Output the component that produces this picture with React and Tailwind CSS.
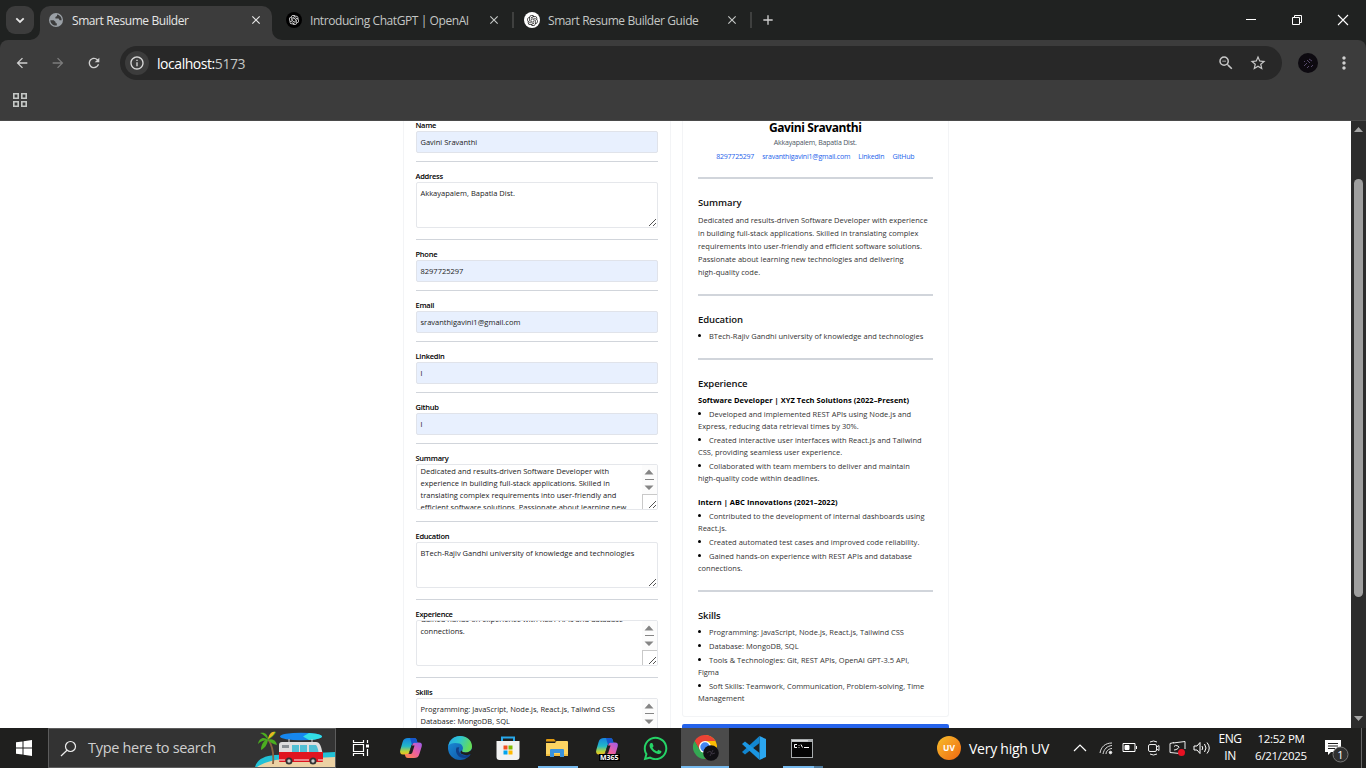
import React from 'react';
import { MdArrowBack, MdArrowForward, MdRefresh, MdInfoOutline, MdStarBorder, MdZoomOut, MdClose, MdAdd, MdMoreVert } from 'react-icons/md';
import { RiOpenaiFill } from 'react-icons/ri';
import { FaWhatsapp } from 'react-icons/fa';

function Globe() {
  return (
    <svg width="14" height="14" viewBox="0 0 14 14">
      <circle cx="7" cy="7" r="7" fill="#9aa0a6" />
      <path d="M1.3 7.2h3.4l1.9 1.7v1.3h1.2v2.2c-3.300.6-6.300-1.700-6.500-5.200zM8 1.500v1.400L6.400 4v1.500h3.200l1 1.800h2c.300-2.700-1.500-5.200-4.600-5.800z" fill="#3c3c3c" />
    </svg>
  );
}

function Tab({ icon, title, active, width }) {
  return (
    <div className={`relative flex h-[34px] items-center pl-2 ${width} ${active ? 'rounded-t-[10px] bg-[#3c3c3c] text-[#e6e6e6]' : 'text-[#c4c7c5]'}`}>
      {active && (
        <>
          <svg className="absolute bottom-0 -left-[10px]" width="10" height="10"><path d="M10 0v10H0A10 10 0 0 0 10 0z" fill="#3c3c3c" /></svg>
          <svg className="absolute bottom-0 -right-[10px]" width="10" height="10"><path d="M0 0v10H10A10 10 0 0 1 0 0z" fill="#3c3c3c" /></svg>
        </>
      )}
      <div className="flex w-4 shrink-0 justify-center -translate-y-[3px]">{icon}</div>
      <div className="ml-2 flex-1 whitespace-nowrap text-[12px] tracking-[-0.42px] -translate-y-[2px]">{title}</div>
      <MdClose className="mr-[9px] -translate-y-[3px]" size={14} color={active ? '#e6e6e6' : '#c4c7c5'} />
    </div>
  );
}

function Browser() {
  return (
    <header className="h-[121px] shrink-0 bg-[#202221]">
      <div className="flex h-10 items-start">
        <div className="mt-1.5 ml-1.5 flex h-7 w-7 items-center justify-center rounded-[9px] bg-[#3c3c3c]">
          <svg width="10" height="7" viewBox="0 0 10 7"><path d="M1.300 1.300 5 5 8.700 1.300" fill="none" stroke="#e6e6e6" strokeWidth="1.800" /></svg>
        </div>
        <div className="mt-1.5 ml-1.5 flex">
          <Tab active width="w-[232px]" title="Smart Resume Builder" icon={<Globe />} />
          <div className="w-[6px]" />
          <Tab width="w-[232px]" title="Introducing ChatGPT | OpenAI" icon={<span className="flex h-4 w-4 items-center justify-center rounded-full bg-black text-white"><RiOpenaiFill size={12} /></span>} />
          <div className="mt-1.5 ml-[2px] h-4 w-[2px] bg-[#3f403f]" />
          <div className="w-[2px]" />
          <Tab width="w-[232px]" title="Smart Resume Builder Guide" icon={<span className="flex h-4 w-4 items-center justify-center rounded-full bg-white text-[#222]"><RiOpenaiFill size={13} /></span>} />
          <div className="mt-1.5 ml-[2px] h-4 w-[2px] bg-[#3f403f]" />
          <MdAdd className="mt-[6px] ml-[8px]" size={16} color="#d0d0d0" />
        </div>
        <div className="mt-[13px] mr-[16px] ml-auto flex gap-[32px]">
          <svg width="14" height="14"><path d="M2 6.500h10" stroke="#fff" /></svg>
          <svg width="14" height="14" fill="none" stroke="#fff"><path d="M2.500 4.500h7v7h-7zM4.500 4.500v-2h7v7h-2" /></svg>
          <svg width="14" height="14" stroke="#fff" strokeWidth="1.100"><path d="M2 2l10 10M12 2 2 12" /></svg>
        </div>
      </div>
      <div className="h-[81px] rounded-t-[8px] border-b border-[#4a4a4a] bg-[#3c3c3c]">
        <div className="flex h-[46px] items-center">
          <MdArrowBack className="ml-[14px]" size={16} color="#d0d0d0" />
          <MdArrowForward className="ml-[20px]" size={16} color="#7c7c7c" />
          <MdRefresh className="ml-[20px]" size={16} color="#d0d0d0" />
          <div className="ml-[18px] flex h-[34px] w-[1162px] items-center rounded-full bg-[#282828] pl-[5px]">
            <span className="flex h-6 w-6 items-center justify-center rounded-full bg-[#3c3c3c]"><MdInfoOutline size={16} color="#d8d8d8" /></span>
            <span className="ml-2 text-[14px] tracking-[-0.45px] text-white">localhost:<span className="text-[#c4c7c5]">5173</span></span>
            <MdZoomOut className="ml-auto" size={18} color="#c8c8c8" />
            <MdStarBorder className="mr-[15px] ml-[14px]" size={18} color="#c8c8c8" />
          </div>
          <svg className="ml-[16px]" width="20" height="20"><circle cx="10" cy="10" r="10" fill="#0d0a10" /><path d="M6 13l3-3m0-3 3 3m-1-4 3 2M9 15l2-2m-5-5 1 1m6 5 2-2" stroke="#574a6b" /></svg>
          <MdMoreVert className="ml-[16px]" size={20} color="#d0d0d0" />
        </div>
        <svg className="mt-[7px] ml-[13px]" width="14" height="14" fill="none" stroke="#c4c7c5" strokeWidth="1.600"><path d="M.8.800h4.400v4.400H.8zM8.800.800h4.400v4.400H8.800zM.8 8.800h4.400v4.400H.8zM8.800 8.800h4.400v4.400H8.800z" /></svg>
      </div>
    </header>
  );
}

const Rule = () => <div className="my-2 h-px bg-[#d1d5db]" />;

function Grip() {
  return <svg width="9" height="9" className="absolute right-0 bottom-0"><path d="M1 8 8 1M5 8l3-3" stroke="#555" fill="none" /></svg>;
}

const Label = ({ children }) => <div className="-ml-[0.5px] h-3 text-[7.5px] leading-[12px] font-semibold tracking-[-0.26px] text-black">{children}</div>;

function Input({ label, value }) {
  return (
    <>
      <Label>{label}</Label>
      <div className="h-[22px] rounded-[2px] border border-[#e0e3ea] bg-[#e8f0fe] pl-[3.5px] leading-[21px] text-[#1b1b1b]">{value}</div>
      <Rule />
    </>
  );
}

function Area({ label, lines, scroll, pad = 'pt-1' }) {
  return (
    <>
      <Label>{label}</Label>
      <div className="relative mb-[11px] h-[46px] overflow-hidden rounded-[2px] border border-[#e5e7eb] bg-white">
        <div className={`pl-[3.5px] leading-[12px] whitespace-nowrap text-[#222] ${pad}`}>
          {lines.map((l) => <div key={l}>{l}</div>)}
        </div>
        {scroll && (
          <div className="absolute top-0 right-0 h-11 w-[15px] bg-[#fcfcfc]">
            <svg width="15" height="29"><path d="M2.500 9.500h9L7 4.500zM2.500 20.500h9L7 25z" fill="#858585" /><path d="M3 14.500h9" stroke="#858585" /></svg>
            <div className="h-[15px] border-t border-l border-[#c9c9c9] bg-white" />
          </div>
        )}
        <Grip />
      </div>
      <div className="mb-2 h-px bg-[#d1d5db]" />
    </>
  );
}

function Form() {
  return (
    <section className="h-[640px] w-[268px] border-x border-[#f3f4f6] px-3">
      <div className="-mt-0.5 w-[242px]">
        <Input label="Name" value="Gavini Sravanthi" />
        <Area label="Address" lines={['Akkayapalem, Bapatla Dist.']} />
        <Input label="Phone" value="8297725297" />
        <Input label="Email" value="sravanthigavini1@gmail.com" />
        <Input label="Linkedin" value="l" />
        <Input label="Github" value="l" />
        <Area label="Summary" scroll pad="pt-0" lines={['Dedicated and results-driven Software Developer with', 'experience in building full-stack applications. Skilled in', 'translating complex requirements into user-friendly and', 'efficient software solutions. Passionate about learning new']} />
        <Area label="Education" lines={['BTech-Rajiv Gandhi university of knowledge and technologies']} />
        <Area label="Experience" scroll pad="-mt-2" lines={['Gained hands-on experience with REST APIs and database', 'connections.']} />
        <Area label="Skills" scroll lines={['Programming: JavaScript, Node.js, React.js, Tailwind CSS', 'Database: MongoDB, SQL']} />
      </div>
    </section>
  );
}

const Bar = () => <div className="mt-4 h-[2px] bg-[#d1d5db]" />;
const Heading = ({ children }) => <h2 className="mt-[17px] mb-1 h-[13px] text-[9.5px] leading-[14px] font-semibold tracking-[-0.1px] text-[#111]">{children}</h2>;
const Role = ({ children }) => <h3 className="h-3 text-[7.5px] leading-[12px] font-bold tracking-[0.04px] whitespace-nowrap text-black">{children}</h3>;

function Item({ first, rest, flush }) {
  return (
    <li className={`leading-[12px] whitespace-nowrap ${flush ? '' : 'mt-0.5'}`}>
      <div className="flex items-center"><span className="mr-[8px] h-[3px] w-[3px] -translate-y-px rounded-full bg-black" />{first}</div>
      {rest && <div>{rest}</div>}
    </li>
  );
}

function Preview() {
  return (
    <div className="flex w-[267px] flex-col">
      <section className="h-[596px] shrink-0 rounded-b-[3px] border-x border-b border-[#f3f4f6] pr-[15px] pl-[15.5px] tracking-[0.01px] text-[#333]">
        <h1 className="h-[15px] text-center text-[12px] leading-[14px] font-bold tracking-[-0.4px] text-black">Gavini Sravanthi</h1>
        <p className="h-3 pt-px text-center text-[7px] leading-[12px] tracking-[-0.2px] text-[#4b5563]">Akkayapalem, Bapatla Dist.</p>
        <div className="mt-0.5 flex h-3 justify-center gap-2 pt-px text-[7px] leading-[12px] tracking-[-0.2px] text-[#2563eb]">
          <span>8297725297</span><span>sravanthigavini1@gmail.com</span><span>LinkedIn</span><span>GitHub</span>
        </div>
        <div className="mt-[15px] h-[2px] bg-[#d1d5db]" />
        <Heading>Summary</Heading>
        <div className="mt-[5px] leading-[13px] whitespace-nowrap">
          <div>Dedicated and results-driven Software Developer with experience</div>
          <div>in building full-stack applications. Skilled in translating complex</div>
          <div>requirements into user-friendly and efficient software solutions.</div>
          <div>Passionate about learning new technologies and delivering</div>
          <div>high-quality code.</div>
        </div>
        <div className="mt-[15px] h-[2px] bg-[#d1d5db]" />
        <Heading>Education</Heading>
        <ul><Item flush first="BTech-Rajiv Gandhi university of knowledge and technologies" /></ul>
        <Bar />
        <Heading>Experience</Heading>
        <Role>Software Developer | XYZ Tech Solutions (2022–Present)</Role>
        <ul>
          <Item first="Developed and implemented REST APIs using Node.js and" rest="Express, reducing data retrieval times by 30%." />
          <Item first="Created interactive user interfaces with React.js and Tailwind" rest="CSS, providing seamless user experience." />
          <Item first="Collaborated with team members to deliver and maintain" rest="high-quality code within deadlines." />
        </ul>
        <div className="h-3" />
        <Role>Intern | ABC Innovations (2021–2022)</Role>
        <ul>
          <Item first="Contributed to the development of internal dashboards using" rest="React.js." />
          <Item first="Created automated test cases and improved code reliability." />
          <Item first="Gained hands-on experience with REST APIs and database" rest="connections." />
        </ul>
        <Bar />
        <Heading>Skills</Heading>
        <ul>
          <Item flush first="Programming: JavaScript, Node.js, React.js, Tailwind CSS" />
          <Item first="Database: MongoDB, SQL" />
          <Item first="Tools & Technologies: Git, REST APIs, OpenAI GPT-3.5 API," rest="Figma" />
          <Item first="Soft Skills: Teamwork, Communication, Problem-solving, Time" rest="Management" />
        </ul>
      </section>
      <button className="mt-[7px] h-6 shrink-0 rounded-[2px] bg-[#2563eb]" />
    </div>
  );
}

function Copilot({ id }) {
  return (
    <svg width="24" height="24" viewBox="0 0 24 24">
      <defs>
        <linearGradient id={`${id}a`} x1="0" y1="0" x2="0" y2="1"><stop offset="0" stopColor="#1683e0" /><stop offset=".5" stopColor="#22b8c8" /><stop offset=".8" stopColor="#b5d23c" /><stop offset="1" stopColor="#f3c01c" /></linearGradient>
        <linearGradient id={`${id}b`} x1="1" y1="0" x2="0" y2="1"><stop offset="0" stopColor="#9a5cf0" /><stop offset=".5" stopColor="#ee5fa0" /><stop offset="1" stopColor="#ff8a3c" /></linearGradient>
      </defs>
      <path d="M9 2h6c2 0 2.500 1 3 3l.5 2h-3c-2 0-2.600 1-3.200 3l-2 6c-.6 2-1.500 2.500-3 2.500H4C1.500 18.500.6 16.500 1.300 14l2.300-8C4.600 3 6 2 9 2z" fill={`url(#${id}a)`} />
      <path d="M15 22H9c-2 0-2.500-1-3-3l-.3-1H8c2 0 2.600-1 3.200-3l2-6c.6-2 1.500-2.500 3-2.500H20c2.500 0 3.400 1.500 2.700 4l-2.300 7.500C19.400 21 18 22 15 22z" fill={`url(#${id}b)`} />
      <path d="M11 2h4c2 0 2.500 1 3 3l.5 1.700H16c-1.500 0-2.300.5-3 2.300z" fill="#1756cc" />
      <path d="M12.500 9.500h3l-2 6.500c-.5 1.500-1 2-2.500 2h-1z" fill="#1f1f1e" />
    </svg>
  );
}

const Edge = () => (
  <svg width="24" height="24" viewBox="0 0 24 24">
    <defs>
      <linearGradient id="e1" x1="0" y1="0" x2="1" y2=".3"><stop stopColor="#2aa8e8" /><stop offset=".5" stopColor="#2fc6cf" /><stop offset="1" stopColor="#65dc58" /></linearGradient>
      <linearGradient id="e2" x1="0" y1="0" x2="1" y2="1"><stop stopColor="#1c90dc" /><stop offset="1" stopColor="#0c4d9c" /></linearGradient>
    </defs>
    <circle cx="12" cy="12" r="12" fill="url(#e2)" />
    <path d="M.3 10C1.300 4.100 6.100 0 12 0c7 0 12 4.600 12 10.200 0 4-3 6.300-6.300 6.300-2.600 0-4.300-1-3.500-2 1.600-2 .7-5.700-2.800-6.900C7 6 1.700 7.300.3 10z" fill="url(#e1)" />
    <path d="M8.500 11.500c-2 5.500 2 10.500 8 10.500 3 0 5-1.500 6.300-4-3.500 2-7 1.700-9.500.2-2.700-1.600-3.300-4.500-2-7z" fill="#103f88" />
    <path d="M14.200 14.500c-.8 1 .9 2 3.500 2 2.800 0 5-1.500 6.300-3.500v4.500l-1 .5c-3 1.600-6.500 1.500-9.200 0-2-1.300-1.500-3 .4-3.500z" fill="#1f1f1e" />
  </svg>
);

const Chrome = () => (
  <svg width="27" height="26" viewBox="0 0 27 26">
    <path d="M12 12V0a12 12 0 0 1 12 12 12 12 0 0 1-12 12z" fill="#fbbc05" />
    <path d="M12 6h10.400A12 12 0 0 0 1.600 6L6.800 15z" fill="#ea4335" />
    <path d="M6.800 15 1.600 6A12 12 0 0 0 12 24l5.200-9z" fill="#34a853" />
    <circle cx="12" cy="12" r="6" fill="#fff" /><circle cx="12" cy="12" r="4.700" fill="#4285f4" />
    <circle cx="18" cy="18" r="7.800" fill="#111014" /><path d="M14 18l3-2 2 3 3-1m-5 3 3-6" stroke="#39333f" fill="none" />
  </svg>
);

function SearchArt() {
  return (
    <svg width="80" height="38" viewBox="0 0 80 38">
      <path d="M0 38c2-7 8-11 20-12l60-3v15z" fill="#22c1d6" />
      <path d="M2 38c9-6 20-8 36-8l42-2v10z" fill="#ecd2a4" />
      <path d="M13 10c4 6 6 15 5 25" stroke="#8a6242" strokeWidth="1.800" fill="none" />
      <path d="M13 11C9 7 4 9 3 15c3-3 6-4 10-4zM13 11C10 10 6 15 6 21c4-2 6-5 7-10zM13 11c0-6-3-8-8-7 3 1 5 3 8 7zM13 11c1-6 4-9 8-8-1 3-4 5-8 8zM13 11c4-2 8 0 9 5-4-1-6-2-9-5z" fill="#4bae20" />
      <path d="M13 10c1-5 4-8 7-7-1 3-4 5-7 7z" fill="#e8b820" />
      <ellipse cx="46" cy="7.500" rx="21" ry="3.800" fill="#1687ee" />
      <path d="M48 7.500l6-3.500c7 .2 13 2 13 3.500s-6 3.500-13 3.500z" fill="#33dfe5" />
      <path d="M34 10v4M57 10v4" stroke="#ccc" />
      <path d="M27 13h34c4 0 5 4 6.500 11H24V16c0-2 1-3 3-3z" fill="#dedede" />
      <path d="M37 16h7v7h-7zM45 16h7v7h-7zM54 16h7c1.500 2 2 4 2.500 7H54z" fill="#50bfd4" />
      <path d="M24 23h44v9c0 1-1 1-2 1H25c-1 0-1-1-1-1z" fill="#e0151f" />
      <path d="M27 16h7v3h-7z" fill="#8a9094" />
      <circle cx="34" cy="32" r="3.500" fill="#333" /><circle cx="34" cy="32" r="1.700" fill="#ccc" />
      <circle cx="58" cy="32" r="3.500" fill="#333" /><circle cx="58" cy="32" r="1.700" fill="#ccc" />
      <path d="M24 31h6M39 31h15M63 31h5" stroke="#f4f4f4" />
    </svg>
  );
}

function AppIcon({ children, className = '' }) {
  return <div className={`relative flex h-10 w-[49px] items-center justify-center ${className}`}>{children}</div>;
}

function Taskbar() {
  return (
    <footer className="flex h-10 shrink-0 bg-[#1f1f1e] text-white">
      <div className="flex w-12 items-center justify-center">
        <svg width="16" height="16"><path d="M0 2.300 6.500 1.400v6.100H0zM7.500 1.200 16 0v7.500H7.500zM0 8.500h6.500v6.100L0 13.700zM7.500 8.500H16V16l-8.500-1.200z" fill="#fff" /></svg>
      </div>
      <div className="flex w-[288px] items-center overflow-hidden border border-[#5c5c5c] bg-[#333]">
        <svg className="ml-[11px]" width="17" height="17" fill="none" stroke="#eee" strokeWidth="1.200"><circle cx="10.500" cy="6.500" r="5" /><path d="M7 10.200 1 16" /></svg>
        <span className="ml-[11px] text-[14.5px] tracking-[-0.3px] whitespace-nowrap text-[#cfcfcf]">Type here to search</span>
        <div className="ml-auto"><SearchArt /></div>
      </div>
      <AppIcon className="pr-px">
        <svg width="17" height="16" fill="none" stroke="#fff" strokeWidth="1.200"><path d="M1.500 4.500h10v7h-10zM1.500 0v2.500h10V0M1.500 16v-2.500h10V16M15.500 0v3M15.500 9v7" /><path d="M14 4.500h3v3h-3z" fill="#fff" stroke="none" /></svg>
      </AppIcon>
      <AppIcon className="pl-0.5"><Copilot id="c" /></AppIcon>
      <AppIcon className="pl-0.5"><Edge /></AppIcon>
      <AppIcon>
        <svg width="24" height="24"><path d="M6 6V1.500h12V6" fill="none" stroke="#28a8ea" strokeWidth="2" /><path d="M.5 5h23v16a3 3 0 0 1-3 3h-17a3 3 0 0 1-3-3z" fill="#f2f2f2" /><path d="M7.500 9.500h4v4h-4z" fill="#f25022" /><path d="M12.500 9.500h4v4h-4z" fill="#7fba00" /><path d="M7.500 14.500h4v4h-4z" fill="#00a4ef" /><path d="M12.500 14.500h4v4h-4z" fill="#ffb900" /></svg>
      </AppIcon>
      <AppIcon>
        <svg width="22" height="20"><path d="M0 2q0-1 1-1h7l2 2.500H0z" fill="#e09a10" /><path d="M0 5h9l1.500-2H21q1 0 1 1v14H0z" fill="#fcd462" /><path d="M0 18V16h22v2z" fill="#f1bd3f" /><path d="M4 19v-7q0-1 1-1h12q1 0 1 1v7h-4v-4H8v4z" fill="#3a93dc" /></svg>
        <div className="absolute bottom-0 left-[6px] h-0.5 w-10 bg-[#76b9ed]" />
      </AppIcon>
      <AppIcon className="pl-0.5">
        <Copilot id="m" />
        <span className="absolute bottom-[7px] left-[18px] bg-black px-px text-[7px] leading-[7px] font-bold">M365</span>
      </AppIcon>
      <AppIcon className="pl-0.5"><FaWhatsapp size={27} color="#25d366" /></AppIcon>
      <div className="relative ml-[2px] flex h-10 w-12 items-center justify-center bg-[#4b4b4b] pl-0.5">
        <Chrome />
        <div className="absolute bottom-0 left-0 h-0.5 w-12 bg-[#76b9ed]" />
      </div>
      <AppIcon>
        <svg width="24" height="24" viewBox="0 0 24 24"><path d="M17.500 0 24 3v18l-6.500 3z" fill="#2ba6f0" /><path d="M17.500 0v7L3 18.500 0 16z" fill="#1286d0" /><path d="M17.500 24v-7L3 5.500 0 8z" fill="#1b96e2" /></svg>
      </AppIcon>
      <AppIcon className="pr-0.5">
        <svg width="22" height="19"><path d="M0 0h22v19H0z" fill="#a8acae" /><path d="M1 3h20v15H1z" fill="#050505" /><path d="M1 1h16v1.500H1z" fill="#d8dadb" /><path d="M6 5.500H3.500v3H6M8 6v.7M8 8v.7M10 5.500l1.500 3M13 8.500h5" stroke="#fff" fill="none" /></svg>
        <div className="absolute bottom-0 left-[5px] flex"><div className="h-0.5 w-[31px] bg-[#76b9ed]" /><div className="h-0.5 w-[9px] bg-[#4d789a]" /></div>
      </AppIcon>
      <div className="ml-auto flex items-center">
        <div className="flex h-6 w-6 items-center justify-center rounded-full bg-linear-to-br from-[#f5bd2c] to-[#ee6510] text-[8.5px] font-bold">UV</div>
        <span className="ml-2 w-[81px] text-[14px] tracking-[-0.25px] whitespace-nowrap">Very high UV</span>
        <svg className="ml-[23px]" width="14" height="14" fill="none" stroke="#fff" strokeWidth="1.200"><path d="M1 10l6-6 6 6" /></svg>
        <svg className="ml-[12px]" width="14" height="14" fill="none" stroke="#ddd"><path d="M1 12C2 6 6 2 13 2M4 13c1-5 4-8 9-8.500M7 13c0-3 3-5.500 6-5.500" /><circle cx="11.500" cy="11.500" r="1.300" fill="#fff" /></svg>
        <svg className="ml-[9px]" width="16" height="14" fill="none" stroke="#fff"><path d="M1 2.500h12v8H1zM14.500 5v3" /><path d="M3 4.500h4v4H3z" fill="#fff" /></svg>
        <svg className="ml-[9px]" width="14" height="16" fill="none" stroke="#eee"><rect x="1.500" y="4.500" width="8" height="7" rx="1.500" /><path d="M9.500 7 12 5.500v5L9.500 9M3 2q3.500-2 7 0M3 14q3.500 2 7 0" /></svg>
        <svg className="ml-[8px]" width="17" height="16" fill="none" stroke="#eee"><path d="M5 2.500 1 3.500v9l10 1V11M4 3l12-1.500V9M5 6.500q1-2 4-.5 2 1 0 2.500-2 1.500-4 1.500" /><circle cx="12.500" cy="12.500" r="3.500" fill="#e81123" stroke="none" /></svg>
        <svg className="ml-[7px]" width="18" height="14" fill="none" stroke="#fff"><path d="M1 5h3l3-3.500v11L4 9H1zM9 5q1.500 2 0 4M11.500 3q3 4 0 8M14 1.500q4.500 5.500 0 11" /></svg>
        <div className="mb-[2px] w-[38px] text-center text-[12px] leading-[17px] tracking-[-0.45px]">ENG<br />IN</div>
        <div className="mb-[2px] ml-[5px] w-[54px] text-center text-[11.5px] leading-[17px] tracking-[-0.3px] whitespace-nowrap">12:52 PM<br />6/21/2025</div>
        <svg className="mt-1 ml-[17px]" width="26" height="26"><path d="M0 3h16v12H6l-3 3v-3H0z" fill="#fff" /><path d="M3 6.500h10M3 9h10M3 11.500h7" stroke="#1f1f1f" /><circle cx="15.500" cy="17.500" r="7.500" fill="#303030" stroke="#777" /><text x="15.500" y="21.500" fontSize="11" textAnchor="middle" fill="#fff">1</text></svg>
        <div className="mr-1 ml-[10px] h-10 w-px bg-[#666]" />
      </div>
    </footer>
  );
}

export default function App() {
  return (
    <div className="flex h-[768px] w-[1366px] flex-col overflow-hidden bg-white font-['Open_Sans','Noto_Sans',sans-serif]">
      <Browser />
      <main className="flex h-[607px] overflow-hidden text-[7.5px]">
        <div className="flex h-full flex-1 gap-[10.5px] overflow-hidden pl-[403px]">
          <Form />
          <Preview />
        </div>
        <div className="flex w-[15px] flex-col items-center bg-[#2c2c2c]">
          <svg className="mt-[6px]" width="9" height="5"><path d="M0 5h9L4.500 0z" fill="#a5a5a5" /></svg>
          <div className="mt-[47px] h-[418px] w-[9px] rounded-full bg-[#9f9f9f]" />
          <svg className="mt-auto mb-[7px]" width="9" height="5"><path d="M0 0h9L4.500 5z" fill="#a5a5a5" /></svg>
        </div>
      </main>
      <Taskbar />
    </div>
  );
}
